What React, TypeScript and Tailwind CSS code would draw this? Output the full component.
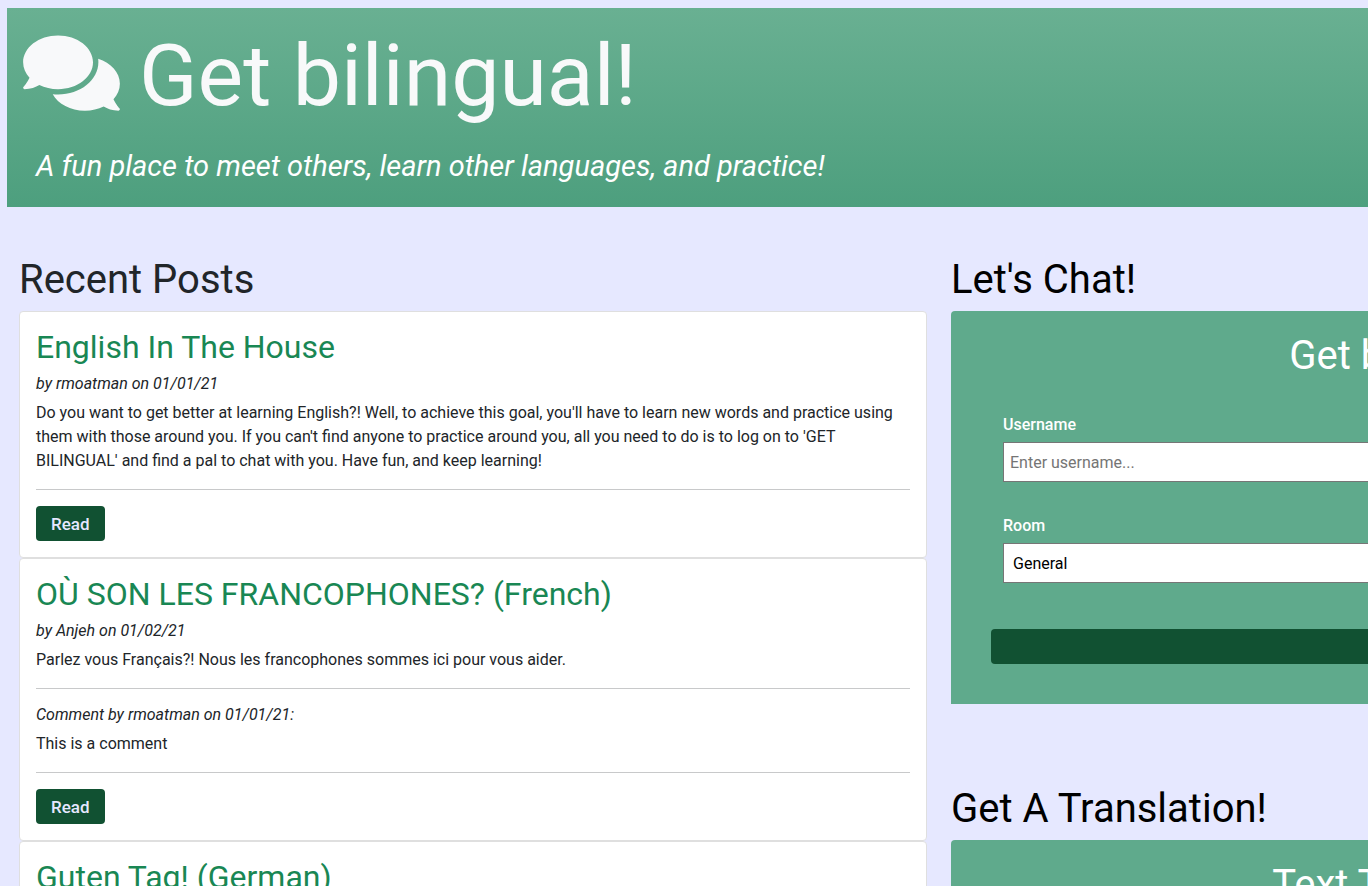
import { FaComments } from "react-icons/fa";

type Post = {
  title: string;
  author: string;
  date: string;
  body: string;
  comments: { author: string; date: string; text: string }[];
};

const posts: Post[] = [
  {
    title: "English In The House",
    author: "rmoatman",
    date: "01/01/21",
    body: "Do you want to get better at learning English?! Well, to achieve this goal, you'll have to learn new words and practice using them with those around you. If you can't find anyone to practice around you, all you need to do is to log on to 'GET BILINGUAL' and find a pal to chat with you. Have fun, and keep learning!",
    comments: [],
  },
  {
    title: "OÙ SON LES FRANCOPHONES? (French)",
    author: "Anjeh",
    date: "01/02/21",
    body: "Parlez vous Français?! Nous les francophones sommes ici pour vous aider.",
    comments: [{ author: "rmoatman", date: "01/01/21", text: "This is a comment" }],
  },
  { title: "Guten Tag! (German)", author: "", date: "", body: "", comments: [] },
];

function Divider() {
  return <hr className="my-4 border-t border-[#c8c9ca]" />;
}

function PostCard({ post }: { post: Post }) {
  return (
    <article className="rounded border border-[#dfdfdf] bg-white p-4">
      <h2 className="mb-2 text-[32px] leading-[38px] text-[#198754]">{post.title}</h2>
      {post.author && (
        <>
          <p className="mb-2 leading-[19px] italic">
            by {post.author} on {post.date}
          </p>
          <p>{post.body}</p>
          {post.comments.map((c) => (
            <div key={c.text}>
              <Divider />
              <p className="mb-2 leading-[19px] italic">
                Comment by {c.author} on {c.date}:
              </p>
              <p>{c.text}</p>
            </div>
          ))}
          <Divider />
          <button type="button" className="block h-[35px] rounded bg-[#115132] px-[15px] text-[17px] font-medium text-[#e6e8ff]">
            Read
          </button>
        </>
      )}
    </article>
  );
}

export default function App() {
  return (
    <div className="h-screen overflow-hidden bg-[#e6e8ff] font-['Roboto',sans-serif] text-base leading-6 text-[#212529]">
      <div className="min-w-[1872px] pt-2 pl-[7px]">
        <header className="bg-linear-to-b from-[#69b092] to-[#4d9f7e] px-4 pt-4 pb-6">
          <h1 className="flex items-center gap-[19px] text-[86px] leading-[103px] text-[#f8f9fa]">
            <FaComments className="mb-[5px] h-[86px] w-[97px]" aria-hidden="true" />
            Get bilingual!
          </h1>
          <p className="mt-[22px] px-[13px] text-[29px] leading-[34px] text-white italic">
            A fun place to meet others, learn other languages, and practice!
          </p>
        </header>

        <main className="mt-[49px] grid grid-cols-2 gap-6 pr-[13px] pl-3">
          <section>
            <h1 className="mb-[7px] text-[40px] leading-[48px]">Recent Posts</h1>
            {posts.map((post) => (
              <PostCard key={post.title} post={post} />
            ))}
          </section>

          <div>
            <section>
              <h1 className="mb-[7px] text-[40px] leading-[48px] text-black">Let's Chat!</h1>
              <div className="rounded-t bg-[#5faa8c] px-10 pt-[21px] pb-10">
                <h2 className="text-center text-[40px] leading-[48px] text-white">Get bilingual!</h2>
                <form>
                  <div className="mt-[33px] px-3">
                    <label htmlFor="username" className="mb-[5px] block font-medium text-white">
                      Username
                    </label>
                    <input
                      id="username"
                      type="text"
                      placeholder="Enter username..."
                      className="block h-10 w-full border border-[#767676] bg-white px-[6px] placeholder:text-[#757575]"
                    />
                  </div>
                  <div className="mt-8 px-3">
                    <label htmlFor="room" className="mb-[5px] block font-medium text-white">
                      Room
                    </label>
                    <select id="room" className="block h-10 w-full border border-[#767676] bg-white px-[5px] text-black">
                      <option>General</option>
                    </select>
                  </div>
                  <button type="submit" className="mt-[46px] block h-[35px] w-full rounded bg-[#115132] text-[17px] font-medium text-[#e6e8ff]">
                    Join Chat
                  </button>
                </form>
              </div>
            </section>
            <section className="mt-[81px]">
              <h1 className="mb-[7px] text-[40px] leading-[48px] text-black">Get A Translation!</h1>
              <div className="rounded-t bg-[#5faa8c] px-10 pt-[21px] pb-10">
                <h2 className="text-center text-[40px] leading-[48px] text-white">Text Translator</h2>
              </div>
            </section>
          </div>
        </main>
      </div>
    </div>
  );
}
